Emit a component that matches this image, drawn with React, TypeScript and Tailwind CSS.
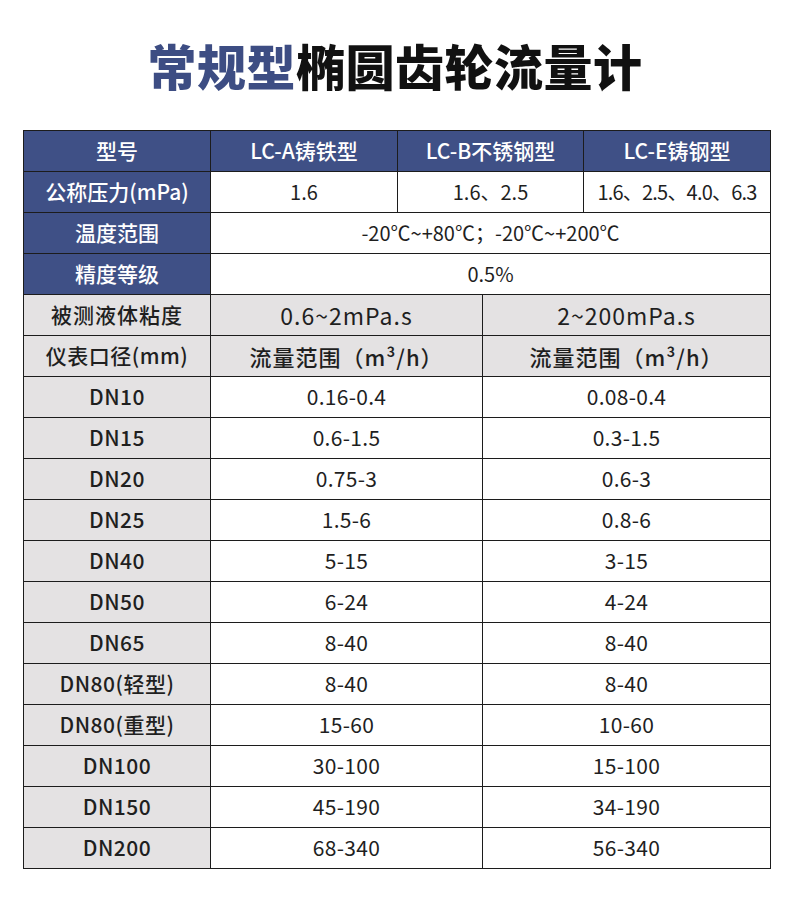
const font = "font-['Noto_Sans_CJK_SC','Noto_Sans',sans-serif]";

const dnRows: [string, string, string][] = [
  ['DN10', '0.16-0.4', '0.08-0.4'],
  ['DN15', '0.6-1.5', '0.3-1.5'],
  ['DN20', '0.75-3', '0.6-3'],
  ['DN25', '1.5-6', '0.8-6'],
  ['DN40', '5-15', '3-15'],
  ['DN50', '6-24', '4-24'],
  ['DN65', '8-40', '8-40'],
  ['DN80(轻型)', '8-40', '8-40'],
  ['DN80(重型)', '15-60', '10-60'],
  ['DN100', '30-100', '15-100'],
  ['DN150', '45-190', '34-190'],
  ['DN200', '68-340', '56-340'],
];

const cell = 'flex items-center justify-center border-r border-[#1c1c1c] h-full';
const head = `${cell} bg-[#3f5086] text-white font-medium text-[21px]`;
const gray = `${cell} bg-[#e4e2e3]`;
const plain = `${cell} bg-white`;

export default function App() {
  return (
    <div className={`w-[790px] h-[913px] bg-white ${font} text-[#1f1f1f]`}>
      {/* Title */}
      <div className="h-[130px] flex items-center justify-center pb-[2px]">
        <h1 className="text-[49px] font-black leading-none tracking-[0.5px]">
          <span className="text-[#3d4d83]">常规型</span>
          <span className="text-[#111]">椭圆齿轮流量计</span>
        </h1>
      </div>

      {/* Spec table */}
      <div className="ml-[23px] w-[748px] border-l border-t border-[#1c1c1c]">
        <div className="grid grid-cols-[187px_187px_186px_187px] h-[41px] border-b border-[#1c1c1c]">
          <div className={head}>型号</div>
          <div className={head}>LC-A铸铁型</div>
          <div className={head}>LC-B不锈钢型</div>
          <div className={head}>LC-E铸钢型</div>
        </div>
        <div className="grid grid-cols-[187px_187px_186px_187px] h-[41px] border-b border-[#1c1c1c]">
          <div className={head}>公称压力(mPa)</div>
          <div className={`${plain} text-[20px]`}>1.6</div>
          <div className={`${plain} text-[20px]`}>1.6、2.5</div>
          <div className={`${plain} text-[20px] tracking-[-0.8px]`}>1.6、2.5、4.0、6.3</div>
        </div>
        <div className="grid grid-cols-[187px_560px] h-[41px] border-b border-[#1c1c1c]">
          <div className={head}>温度范围</div>
          <div className={`${plain} text-[20px]`}>-20℃~+80℃；-20℃~+200℃</div>
        </div>
        <div className="grid grid-cols-[187px_560px] h-[41px] border-b border-[#1c1c1c]">
          <div className={head}>精度等级</div>
          <div className={`${plain} text-[20px]`}>0.5%</div>
        </div>
        <div className="grid grid-cols-[187px_272px_288px] h-[41px] border-b border-[#1c1c1c]">
          <div className={`${gray} text-[21px] font-medium tracking-[1px]`}>被测液体粘度</div>
          <div className={`${gray} text-[23px] tracking-[1px]`}>0.6~2mPa.s</div>
          <div className={`${gray} text-[23px] tracking-[1px]`}>2~200mPa.s</div>
        </div>
        <div className="grid grid-cols-[187px_272px_288px] h-[41px] border-b border-[#1c1c1c]">
          <div className={`${gray} text-[21px] font-medium tracking-[0.5px]`}>仪表口径(mm)</div>
          <div className={`${gray} text-[22px] font-medium tracking-[1px]`}>流量范围（m³/h）</div>
          <div className={`${gray} text-[22px] font-medium tracking-[1px]`}>流量范围（m³/h）</div>
        </div>
        {dnRows.map(([dn, a, b]) => (
          <div key={dn} className="grid grid-cols-[187px_272px_288px] h-[41px] border-b border-[#1c1c1c]">
            <div className={`${gray} text-[21px] font-medium tracking-[0.5px]`}>{dn}</div>
            <div className={`${plain} text-[21px] tracking-[0.3px]`}>{a}</div>
            <div className={`${plain} text-[21px] tracking-[0.3px]`}>{b}</div>
          </div>
        ))}
      </div>
    </div>
  );
}
